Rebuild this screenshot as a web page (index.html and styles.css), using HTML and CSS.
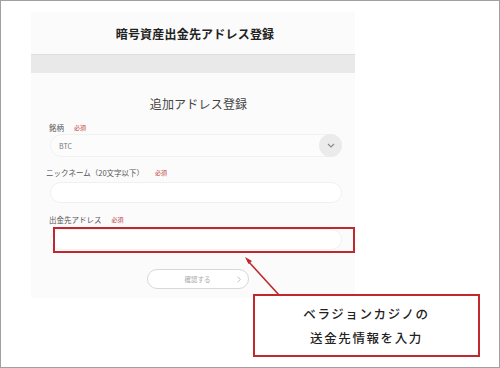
FILE: index.html
```html
<!DOCTYPE html>
<html lang="ja">
<head>
<meta charset="utf-8">
<link rel="stylesheet" href="styles.css">
</head>
<body>
<div class="frame">
  <div class="panel">
    <div class="page-head">暗号資産出金先アドレス登録</div>
    <div class="band"></div>
    <div class="form">
      <div class="form-title">追加アドレス登録</div>

      <div class="label label-first"><span>銘柄</span><span class="req">必須</span></div>
      <div class="select">
        <span class="select-value">BTC</span>
        <span class="select-btn">
          <svg width="8" height="5" viewBox="0 0 8 5"><path d="M1 1 L4 4 L7 1" fill="none" stroke="#888" stroke-width="1.1"/></svg>
        </span>
      </div>

      <div class="label label-second"><span>ニックネーム（20文字以下）</span><span class="req req-wide">必須</span></div>
      <div class="input"></div>

      <div class="label label-third"><span>出金先アドレス</span><span class="req">必須</span></div>
      <div class="input"></div>

      <div class="btn-row">
        <div class="btn">
          <span class="btn-text">確認する</span>
          <svg class="btn-chev" width="4" height="7" viewBox="0 0 4 7"><path d="M0.7 0.7 L3.3 3.5 L0.7 6.3" fill="none" stroke="#bbb" stroke-width="0.9"/></svg>
        </div>
      </div>
    </div>
  </div>

  <div class="highlight"></div>
  <svg class="arrow" width="60" height="60" viewBox="0 0 60 60">
    <line x1="38" y1="42" x2="7" y2="8" stroke="#c1272d" stroke-width="1.6"/>
    <path d="M4 4 L11 8 L7.5 11 Z" fill="#c1272d"/>
  </svg>
  <div class="callout">
    <div>ベラジョンカジノの</div>
    <div>送金先情報を入力</div>
  </div>
</div>
</body>
</html>
```

FILE: styles.css
```css
html, body {
  margin: 0;
  padding: 0;
  background: #ffffff;
}

body {
  font-family: "Noto Sans CJK JP", "Noto Sans", sans-serif;
}

.frame {
  position: relative;
  width: 500px;
  height: 368px;
  box-sizing: border-box;
  border: 1px solid #a0a0a0;
  padding: 11px 0 0 30px;
}

.panel {
  width: 324px;
  background: #fbfbfb;
}

.page-head {
  height: 42px;
  display: flex;
  align-items: center;
  justify-content: center;
  font-size: 12px;
  font-weight: 700;
  letter-spacing: 0.2px;
  color: #222;
  padding-left: 4px;
  box-sizing: border-box;
}

.band {
  height: 19px;
  background: #e9e9e9;
  border-top: 1px solid #dedede;
  box-sizing: border-box;
}

.form {
  padding: 23px 13px 9px 18px;
}

.form-title {
  height: 16px;
  line-height: 16px;
  text-align: center;
  font-size: 12px;
  color: #444;
  padding-left: 6px;
  letter-spacing: 0.2px;
}

.label {
  display: flex;
  align-items: center;
  height: 10px;
  font-size: 7.5px;
  color: #555;
}

.label-first { margin-top: 10px; }
.label-second { margin-top: 10px; margin-left: -3px; }
.label-third { margin-top: 11px; }

.req {
  color: #c0393b;
  font-size: 6px;
  margin-left: 10px;
}

.req-wide { margin-left: 11px; }

.select {
  margin: 2px 0 0 1px;
  height: 23px;
  border: 1px solid #f1f1f1;
  border-radius: 12px;
  background: #fcfcfc;
  display: flex;
  align-items: center;
  justify-content: space-between;
  box-sizing: border-box;
}

.select-value {
  font-size: 7px;
  color: #777;
  padding-left: 8px;
}

.select-btn {
  width: 23px;
  height: 23px;
  margin-right: -1px;
  border-radius: 50%;
  background: #ebebeb;
  display: flex;
  align-items: center;
  justify-content: center;
}

.input {
  margin: 5px 0 0 1px;
  height: 21px;
  border: 1px solid #f0f0f0;
  border-radius: 11px;
  background: #ffffff;
  box-sizing: border-box;
}

.btn-row {
  display: flex;
  justify-content: center;
  margin-top: 19px;
  padding-left: 4px;
}

.btn {
  position: relative;
  width: 102px;
  height: 20px;
  border: 1px solid #d8d8d8;
  border-radius: 10px;
  box-sizing: border-box;
  background: #fff;
  display: flex;
  align-items: center;
  justify-content: center;
}

.btn-text {
  font-size: 6.5px;
  color: #aaa;
}

.btn-chev {
  position: absolute;
  right: 7px;
  top: 6px;
}

.highlight {
  position: absolute;
  left: 52px;
  top: 226px;
  width: 302px;
  height: 26px;
  border: 2px solid #c1272d;
  box-sizing: border-box;
}

.arrow {
  position: absolute;
  left: 240px;
  top: 252px;
}

.callout {
  position: absolute;
  left: 252px;
  top: 293px;
  width: 227px;
  height: 63px;
  border: 2px solid #c1272d;
  box-sizing: border-box;
  background: #fff;
  display: flex;
  flex-direction: column;
  align-items: center;
  justify-content: center;
  gap: 6px;
  font-size: 12.5px;
  letter-spacing: 1.6px;
  color: #222;
  font-weight: 500;
  line-height: 18px;
}
```
